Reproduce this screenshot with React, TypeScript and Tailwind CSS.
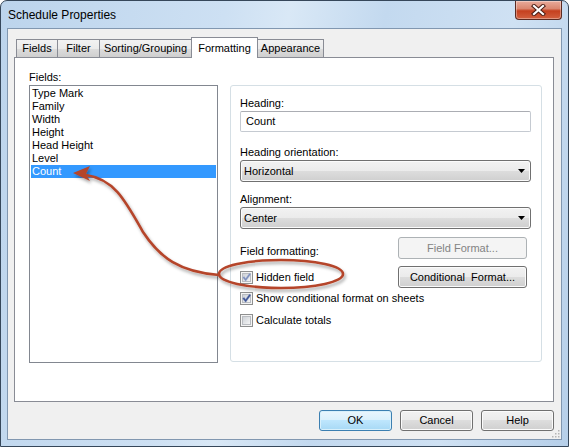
import React from "react";

const fields = ["Type Mark", "Family", "Width", "Height", "Head Height", "Level", "Count"];

const tabs = [
  { label: "Fields", w: "w-[42px]" },
  { label: "Filter", w: "w-[43px]" },
  { label: "Sorting/Grouping", w: "w-[93px]" },
  { label: "Formatting", w: "w-[67px]", active: true },
  { label: "Appearance", w: "w-[67px]" },
];

const btnGray =
  "flex h-[21px] items-center justify-center rounded-[3px] border border-[#707070] bg-[linear-gradient(to_bottom,#f2f2f2_0%,#ebebeb_50%,#dddddd_50%,#cfcfcf_100%)] shadow-[inset_0_0_0_1px_#fbfbfb]";

function CheckBox({ checked, label, faded }: { checked?: boolean; label: string; faded?: boolean }) {
  return (
    <div className="flex h-[16px] items-center gap-[3px]">
      <svg width="13" height="13" viewBox="0 0 13 13">
        <defs>
          <linearGradient id="cbg" x1="0" y1="0" x2="1" y2="1">
            <stop offset="0" stopColor="#cbcfd5" />
            <stop offset="1" stopColor="#f7f7f7" />
          </linearGradient>
        </defs>
        <rect x="0.5" y="0.5" width="12" height="12" fill="#f4f4f4" stroke="#8e8f8f" />
        <rect x="2.5" y="2.5" width="8" height="8" fill="url(#cbg)" stroke="#b9bcc1" strokeWidth="1" />
        {checked && (
          <path
            d="M2.6 6.6 L4.2 5.4 L5.6 7.4 L9.4 2.2 L10.8 3.3 L5.7 10.2 Z"
            fill={faded ? "#7d8fbd" : "#3d5495"}
            stroke={faded ? "#a9b5d4" : "#6f80b3"}
            strokeWidth="0.4"
          />
        )}
      </svg>
      <span>{label}</span>
    </div>
  );
}

function Select({ value }: { value: string }) {
  return (
    <div className="flex h-[22px] w-[291px] items-center justify-between rounded-[3px] border border-[#707070] bg-[linear-gradient(to_bottom,#f2f2f2_0%,#ebebeb_50%,#dddddd_50%,#cfcfcf_100%)] pl-[3px] pr-[5px] shadow-[inset_0_0_0_1px_#fbfbfb]">
      <span>{value}</span>
      <svg width="7" height="4" viewBox="0 0 7 4">
        <path d="M0 0 L7 0 L3.5 4 Z" fill="#000" />
      </svg>
    </div>
  );
}

export default function App() {
  return (
    <div className="relative h-[447px] w-[569px] overflow-hidden bg-white font-['Liberation_Sans',Arial,sans-serif] text-[11px] text-black">
      <div className="relative flex h-full w-full flex-col rounded-t-[7px] border border-[#36475a] bg-[linear-gradient(100deg,#bcd4ec_0%,#cde0f3_35%,#d9e8f6_45%,#c3d9ef_60%,#cfe1f3_80%,#b6cfe9_100%)]">
        {/* title bar */}
        <div className="flex h-[27px] shrink-0 items-center pl-[7px] pt-[1px] text-[12px]">Schedule Properties</div>

        <div className="absolute right-[6px] top-0 flex h-[19px] w-[47px] items-center justify-center rounded-b-[4px] border border-t-0 border-[#5b2b22] bg-[linear-gradient(to_bottom,#e9ab9b_0%,#db8770_42%,#c5401f_55%,#d2603f_100%)] shadow-[inset_0_0_0_1px_rgba(255,255,255,0.35)]">
          <svg width="15" height="12" viewBox="0 0 15 12">
            <path d="M3 2 L12 10 M12 2 L3 10" stroke="#4b1d14" strokeWidth="4.2" strokeLinecap="square" />
            <path d="M3 2 L12 10 M12 2 L3 10" stroke="#ffffff" strokeWidth="2.2" strokeLinecap="square" />
          </svg>
        </div>

        {/* client area */}
        <div className="relative mx-[6px] flex h-[412px] flex-col border border-[#8197b0] bg-[#f0f0f0] pb-[8px] pl-[6px] pr-[7px] pt-[8px]">
          {/* tabs */}
          <div className="relative z-10 flex h-[20px] items-end pl-[2px]">
            {tabs.map((t, i) =>
              t.active ? (
                <div
                  key={t.label}
                  className={`${t.w} -mb-px -ml-px flex h-[21px] items-start justify-center border border-b-0 border-[#898c95] bg-white pt-[2px]`}
                >
                  {t.label}
                </div>
              ) : (
                <div
                  key={t.label}
                  className={`${t.w} ${i === 0 ? "" : "-ml-px"} flex h-[18px] items-center justify-center border border-b-0 border-[#898c95] bg-[linear-gradient(to_bottom,#f2f2f2_0%,#ebebeb_50%,#dddddd_50%,#cfcfcf_100%)]`}
                >
                  {t.label}
                </div>
              )
            )}
          </div>

          {/* tab panel */}
          <div className="flex h-[345px] border border-[#898c95] bg-white pl-[14px] pt-[12px]">
            <div className="flex w-[189px] flex-col">
              <div className="h-[15px] leading-[15px]">Fields:</div>
              <div className="h-[278px] border border-[#828790] bg-white p-[1px]">
                {fields.map((f) => (
                  <div
                    key={f}
                    className={`h-[13px] pl-[1px] leading-[13px] ${f === "Count" ? "bg-[#3399ff] text-white" : ""}`}
                  >
                    {f}
                  </div>
                ))}
              </div>
            </div>

            <div className="ml-[12px] mt-[15px] flex h-[277px] w-[312px] flex-col rounded-[3px] border border-[#d5dfe5] pl-[9px] pr-[10px] pt-[10px]">
              <div className="h-[15px] leading-[15px]">Heading:</div>
              <div className="flex h-[21px] w-[291px] items-center rounded-[2px] border border-[#c5cad1] border-t-[#abadb3] pl-[5px]">
                Count
              </div>

              <div className="mt-[13px] h-[15px] leading-[15px]">Heading orientation:</div>
              <Select value="Horizontal" />

              <div className="mt-[10px] h-[15px] leading-[15px]">Alignment:</div>
              <Select value="Center" />

              <div className="mt-[8px] flex items-end justify-between pr-[4px]">
                <span className="h-[15px] leading-[15px]">Field formatting:</span>
                <div className="flex h-[22px] w-[129px] items-center justify-center rounded-[3px] border border-[#adb2b5] bg-[#f4f4f4] text-[#838383]">
                  Field Format...
                </div>
              </div>

              <div className="mt-[7px] flex h-[22px] items-center justify-between pr-[4px]">
                <CheckBox checked faded label="Hidden field" />
                <div className={`${btnGray} h-[22px] w-[129px] whitespace-pre`}>Conditional  Format...</div>
              </div>

              <div className="mt-[2px]">
                <CheckBox checked label="Show conditional format on sheets" />
              </div>
              <div className="mt-[6px]">
                <CheckBox label="Calculate totals" />
              </div>
            </div>
          </div>

          {/* dialog buttons */}
          <div className="mt-[8px] flex justify-end gap-[8px]">
            <div className="flex h-[21px] w-[73px] items-center justify-center rounded-[3px] border border-[#3c7fb1] bg-[linear-gradient(to_bottom,#eaf6fd_0%,#d9f0fc_50%,#bee6fd_50%,#a7d9f5_100%)] shadow-[inset_0_0_0_1px_#d8f0fb]">
              OK
            </div>
            <div className={`${btnGray} w-[73px]`}>Cancel</div>
            <div className={`${btnGray} w-[73px]`}>Help</div>
          </div>

          <svg className="absolute bottom-[1px] right-[1px]" width="9" height="9" viewBox="0 0 9 9">
            {[
              [7, 1],
              [4, 4],
              [7, 4],
              [1, 7],
              [4, 7],
              [7, 7],
            ].map(([x, y]) => (
              <rect key={`${x}-${y}`} x={x} y={y} width="1.5" height="1.5" fill="#b5b5b5" />
            ))}
          </svg>
        </div>
      </div>

      {/* annotation drawn over the dialog */}
      <svg className="pointer-events-none absolute left-0 top-0" width="569" height="447" viewBox="0 0 569 447">
        <defs>
          <filter id="sh" x="-20%" y="-20%" width="140%" height="160%">
            <feDropShadow dx="1.5" dy="2.5" stdDeviation="1.6" floodColor="#000" floodOpacity="0.35" />
          </filter>
        </defs>
        <g filter="url(#sh)" stroke="#b5452b" fill="none" strokeWidth="2.6">
          <ellipse cx="281" cy="274" rx="62" ry="14" />
          <path d="M219 275 C 180 272, 160 258, 143 232 C 125 200, 114 179, 86 175" strokeLinecap="round" />
          <path d="M73 173 L90 166 L86 174 L90 181 Z" fill="#b5452b" stroke="none" />
        </g>
      </svg>
    </div>
  );
}
